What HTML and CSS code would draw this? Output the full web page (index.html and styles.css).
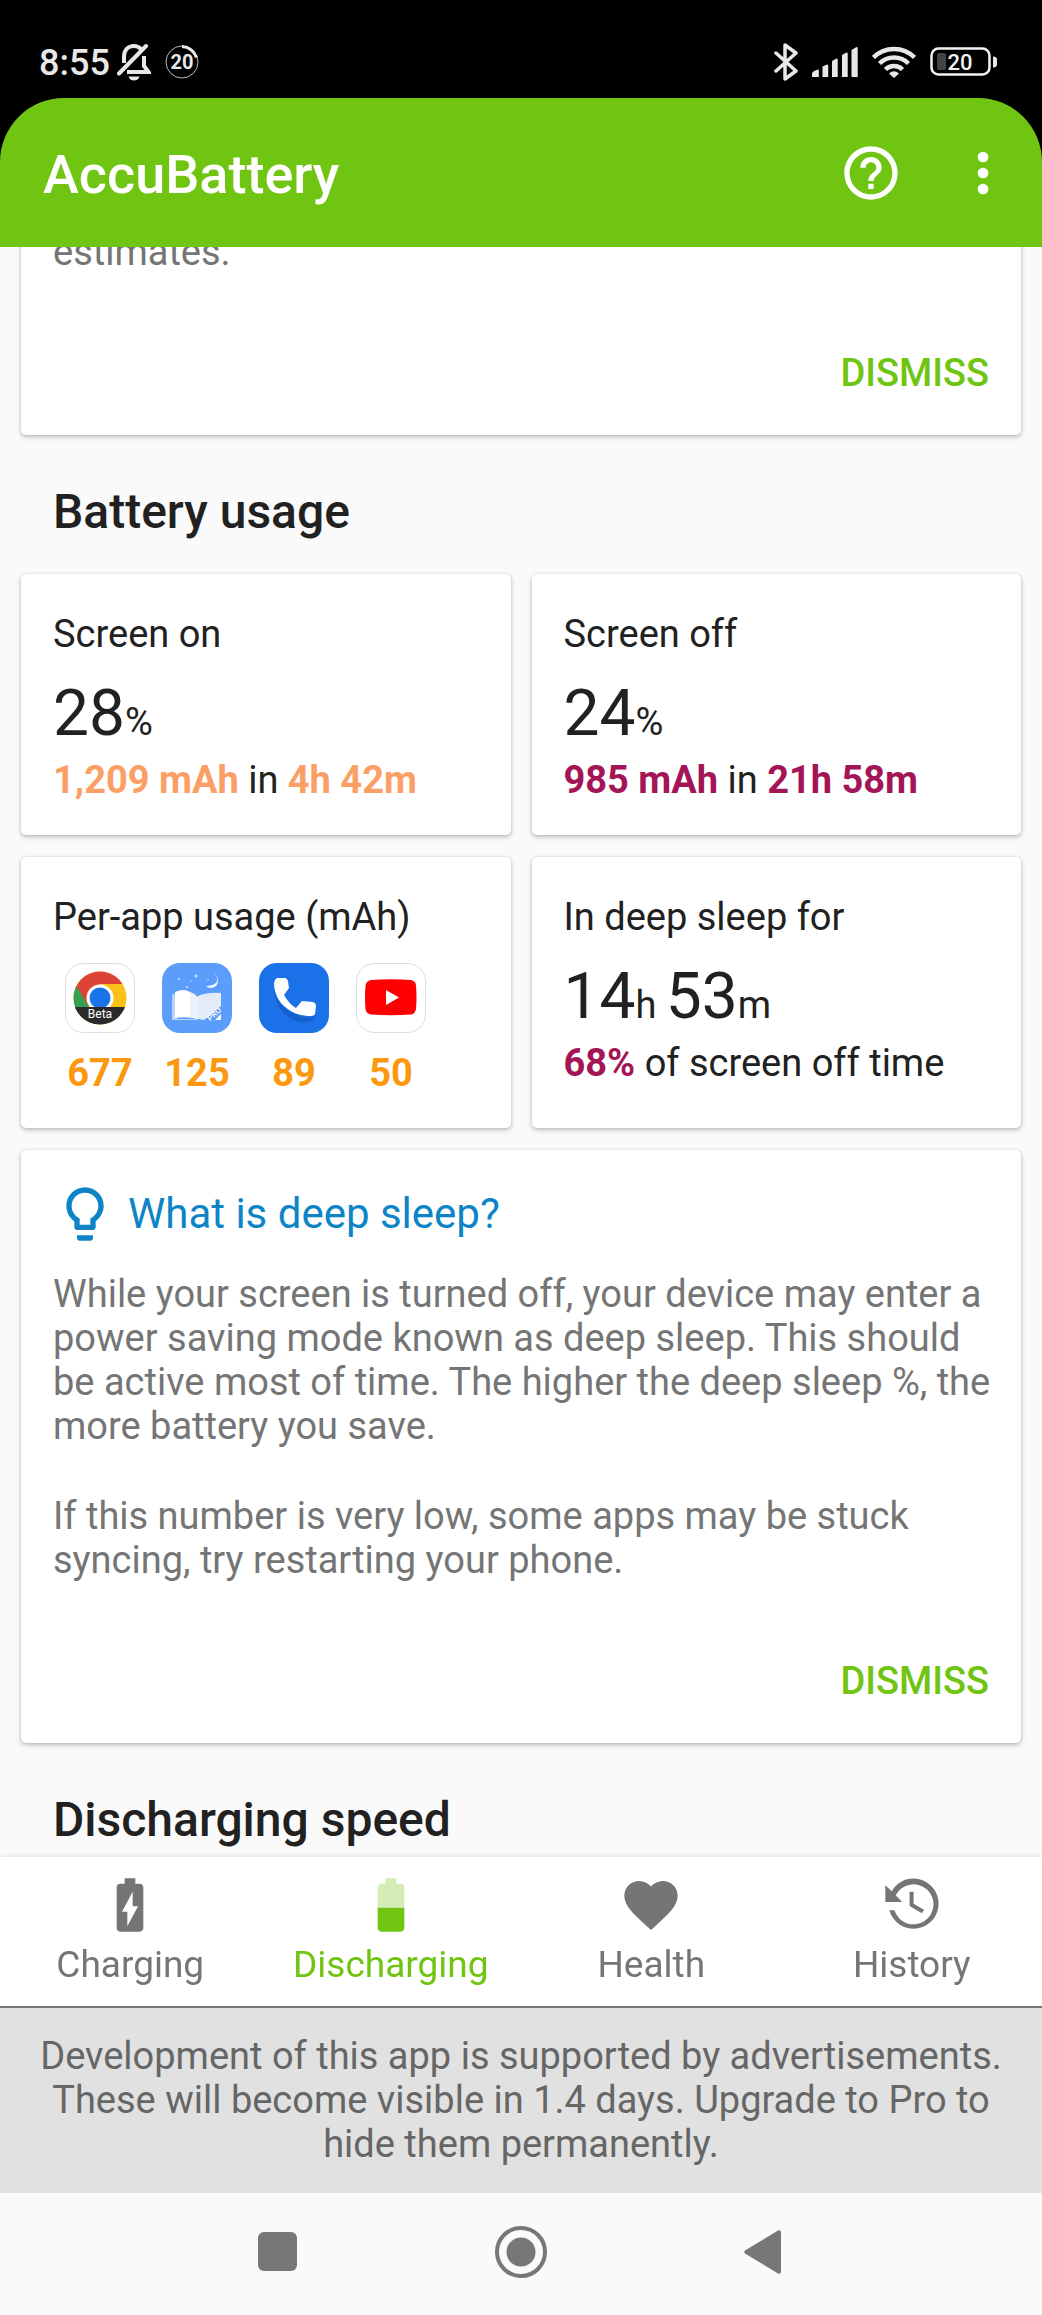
FILE: index.html
```html
<!DOCTYPE html>
<html lang="en">
<head>
  <meta charset="UTF-8">
  <meta name="viewport" content="width=device-width, initial-scale=1">
  <title>AccuBattery</title>
  <link rel="stylesheet" href="styles.css">
</head>
<body>
  <div class="screen">
    <div class="status-bar">
      <span class="clock">8:55</span>
      <svg class="bell" width="34" height="38" viewBox="0 0 34 38" fill="none" stroke="#e8e8e8" stroke-width="4">
        <path d="M7 20V14c0-7 4-11 10-11 3 0 5 1 7 3M27 13v10l4.500 6H10"/>
        <path d="M2 30.500L29 3" stroke-linecap="round"/>
        <path d="M11.500 33.500h11c-1 3-3 4-5.500 4s-4.500-1-5.500-4z" fill="#e8e8e8" stroke="none"/>
      </svg>
      <svg class="level" width="34" height="36" viewBox="0 0 34 36">
        <circle cx="17" cy="18" r="16" fill="none" stroke="#bbb" stroke-width="1"/>
        <path d="M17 2.500a16 16 0 0 1 14.500 11" fill="none" stroke="#e8e8e8" stroke-width="3"/>
        <text x="17" y="25" text-anchor="middle" class="level-text">20</text>
      </svg>
      <div class="status-right">
        <svg width="24" height="38" viewBox="0 0 24 38" fill="none" stroke="#e8e8e8" stroke-width="3.500" stroke-linejoin="round" stroke-linecap="round">
          <path d="M2 10l20 18-11 8V2l11 8L2 28"/>
        </svg>
        <svg width="46" height="30" viewBox="0 0 46 30" fill="#e8e8e8">
          <path d="M0 30v-3.500q0-2 6-4q.8 0 .8 1V30z"/>
          <path d="M10.500 30V19.500l4.500-2q1.200 0 1.200 1V30z"/>
          <path d="M20 30V14l4.500-2.500q1.200 0 1.200 1V30z"/>
          <path d="M30 30V8l4.500-2.500q1.200 0 1.200 1V30z"/>
          <path d="M39.500 30V3L44.500 0q1.200 0 1.200 1V30z"/>
        </svg>
        <svg width="44" height="32" viewBox="0 0 44 32" fill="none" stroke="#e8e8e8" stroke-width="4.500">
          <path d="M1.500 11.500a29 29 0 0 1 41 0"/>
          <path d="M7.500 17.500a20.500 20.500 0 0 1 29 0"/>
          <path d="M13.500 23.500a12 12 0 0 1 17 0"/>
          <path d="M17 27.500q5-4.500 10 0l-5 4.500z" fill="#e8e8e8" stroke="none"/>
        </svg>
        <svg width="67" height="30" viewBox="0 0 67 30">
          <rect x="1.500" y="1.500" width="58" height="26" rx="7" fill="none" stroke="#f2f2f2" stroke-width="2.500"/>
          <rect x="7" y="6" width="9" height="17" rx="2" fill="#444"/>
          <path d="M63 9.500q4 0 4 3v5q0 3-4 3z" fill="#e8e8e8"/>
          <text x="30" y="22.500" text-anchor="middle" class="battery-text">20</text>
        </svg>
      </div>
    </div>

    <div class="app">
      <header class="app-bar">
        <h1>AccuBattery</h1>
        <button class="icon-button" aria-label="Help">
          <svg viewBox="0 0 24 24"><path d="M11 18h2v-2h-2v2zm1-16C6.480 2 2 6.480 2 12s4.480 10 10 10 10-4.480 10-10S17.520 2 12 2zm0 18c-4.410 0-8-3.590-8-8s3.590-8 8-8 8 3.590 8 8-3.590 8-8 8zm0-14c-2.210 0-4 1.790-4 4h2c0-1.100.9-2 2-2s2 .9 2 2c0 2-3 1.750-3 5h2c0-2.250 3-2.500 3-5 0-2.210-1.790-4-4-4z"/></svg>
        </button>
        <button class="icon-button" aria-label="More options">
          <svg viewBox="0 0 24 24"><circle cx="12" cy="6" r="2"/><circle cx="12" cy="12" r="2"/><circle cx="12" cy="18" r="2"/></svg>
        </button>
      </header>

      <main class="content">
        <section class="card tip scrolled">
          <p>estimates.</p>
          <button class="dismiss">DISMISS</button>
        </section>

        <h2>Battery usage</h2>

        <div class="stats">
          <section class="card stat">
            <h3>Screen on</h3>
            <p class="value">28<small>%</small></p>
            <p class="detail"><b class="on">1,209 mAh</b> in <b class="on">4h 42m</b></p>
          </section>
          <section class="card stat">
            <h3>Screen off</h3>
            <p class="value">24<small>%</small></p>
            <p class="detail"><b class="off">985 mAh</b> in <b class="off">21h 58m</b></p>
          </section>
          <section class="card stat">
            <h3>Per-app usage (mAh)</h3>
            <ul class="apps">
              <li>
                <svg viewBox="0 0 70 70">
                  <clipPath id="disc"><circle cx="35" cy="35" r="26.500"/></clipPath>
                  <rect x=".5" y=".5" width="69" height="69" rx="18" fill="#fff" stroke="#ddd"/>
                  <g clip-path="url(#disc)">
                    <rect width="70" height="70" fill="#fbc116"/>
                    <path d="M0 0h70v21H35L23 44 8 22z" fill="#db4437"/>
                    <path d="M0 10l12 14 12 20 11 26H0z" fill="#34a050"/>
                    <circle cx="35" cy="35" r="13.500" fill="#fff"/>
                    <circle cx="35" cy="35" r="10.500" fill="#1a73e8"/>
                    <rect y="44" width="70" height="26" fill="#2b2b2b"/>
                  </g>
                  <text x="35" y="55" text-anchor="middle" class="beta">Beta</text>
                </svg>
                <span>677</span>
              </li>
              <li>
                <svg viewBox="0 0 70 70">
                  <rect width="70" height="70" rx="18" fill="#5c9cfa"/>
                  <path d="M50 10c8 3 8 13-6 13 3 3 12 3 12-6 0-4-3-6-6-7z" fill="#fff"/>
                  <g fill="#cfe2ff"><circle cx="17" cy="16" r="1"/><circle cx="34" cy="13" r="1.500"/><circle cx="25" cy="24" r="1"/><circle cx="29" cy="18" r=".7"/><circle cx="46" cy="17" r=".7"/></g>
                  <path d="M10 31h5v25h20v1H10z" fill="#b9d4fb"/>
                  <path d="M13 29q9-4 15 0l8 5v22q-12-3-23-1z" fill="#fff"/>
                  <path d="M36 33q10-4 23-3v13L42 57l-6-1z" fill="#e4ebf8"/>
                  <path d="M28 29q6 2 8 6v21q-5-2-8-2z" fill="#edf1f9"/>
                  <path d="M59 51v6h-6z" fill="#fff"/>
                  <text x="52" y="54" text-anchor="middle" transform="rotate(-43 52 51)" class="pro">PRO</text>
                </svg>
                <span>125</span>
              </li>
              <li>
                <svg viewBox="0 0 70 70">
                  <rect width="70" height="70" rx="18" fill="#1b72e8"/>
                  <path d="M15 20q0 30 36 35l6-3-2 5-10 3q-24-3-30-30z" fill="#1660cb"/>
                  <path d="M18 15h8q2 0 3 3l1 7-5 7q5 9 12 13l6-7 11 1q3 1 3 4l-1 8q-1 2-4 2C30 53 15 38 15 20q0-3 3-5z" fill="#fff"/>
                </svg>
                <span>89</span>
              </li>
              <li>
                <svg viewBox="0 0 70 70">
                  <rect x=".5" y=".5" width="69" height="69" rx="18" fill="#fff" stroke="#ddd"/>
                  <path d="M15 17q20-1.500 40 0 5 1 5 6 1 12 0 23-1 5-5 5.500-20 1.500-40 0-5-1-5.500-5.500-1-12 0-23 .5-5 5.500-6z" fill="#f00"/>
                  <path d="M30 27v15l13-7.500z" fill="#fff"/>
                </svg>
                <span>50</span>
              </li>
            </ul>
          </section>
          <section class="card stat">
            <h3>In deep sleep for</h3>
            <p class="value">14<small>h </small>53<small>m</small></p>
            <p class="detail"><b class="off">68%</b> of screen off time</p>
          </section>
        </div>

        <section class="card tip">
          <h3 class="tip-title">
            <svg viewBox="0 0 24 24"><path d="M9 21c0 .5.400 1 1 1h4c.6 0 1-.5 1-1v-1H9v1zm3-19C8.100 2 5 5.100 5 9c0 2.400 1.200 4.500 3 5.700V17c0 .5.400 1 1 1h6c.6 0 1-.5 1-1v-2.300c1.800-1.300 3-3.400 3-5.700 0-3.900-3.100-7-7-7zm2.900 11.100l-.9.600V16h-4v-2.300l-.9-.6C7.800 12.200 7 10.600 7 9c0-2.800 2.200-5 5-5s5 2.200 5 5c0 1.600-.8 3.200-2.100 4.100z"/></svg>
            What is deep sleep?
          </h3>
          <p>While your screen is turned off, your device may enter a power saving mode known as deep sleep. This should be active most of time. The higher the deep sleep %, the more battery you save.</p>
          <p>If this number is very low, some apps may be stuck syncing, try restarting your phone.</p>
          <button class="dismiss">DISMISS</button>
        </section>

        <h2>Discharging speed</h2>
      </main>

      <nav class="tabs">
        <a href="#charging">
          <svg viewBox="0 0 24 24"><path d="M15.670 4H14V2h-4v2H8.330C7.600 4 7 4.600 7 5.330v15.330C7 21.400 7.600 22 8.330 22h7.330c.74 0 1.340-.6 1.340-1.330V5.330C17 4.600 16.400 4 15.670 4zM11 20v-5.500H9L13 7v5.500h2L11 20z"/></svg>
          Charging
        </a>
        <a href="#discharging" class="active">
          <svg viewBox="0 0 24 24"><path fill-opacity=".3" d="M17 5.330C17 4.600 16.400 4 15.670 4H14V2h-4v2H8.330C7.600 4 7 4.600 7 5.330V13h10V5.330z"/><path d="M7 13v7.670C7 21.400 7.600 22 8.330 22h7.330c.74 0 1.340-.6 1.340-1.330V13H7z"/></svg>
          Discharging
        </a>
        <a href="#health">
          <svg viewBox="0 0 24 24"><path d="M12 21.350l-1.450-1.320C5.400 15.360 2 12.280 2 8.500 2 5.420 4.420 3 7.500 3c1.740 0 3.410.81 4.500 2.090C13.090 3.810 14.760 3 16.500 3 19.580 3 22 5.420 22 8.500c0 3.780-3.400 6.860-8.550 11.540L12 21.350z"/></svg>
          Health
        </a>
        <a href="#history">
          <svg viewBox="0 0 24 24"><path d="M12.600 2.100a9.400 9.400 0 0 0-8.200 4.700L2 4.600v6.300h6.300L5.900 8.300a7.500 7.500 0 1 1-.5 5.700l-1.900 0a9.400 9.400 0 1 0 9.100-11.900zM11.100 7v5.400l4.600 2.700.8-1.300-3.900-2.300V7z"/></svg>
          History
        </a>
      </nav>

      <p class="ad-notice">Development of this app is supported by advertisements. These will become visible in 1.4 days. Upgrade to Pro to hide them permanently.</p>
    </div>

    <div class="system-nav">
      <button aria-label="Recent apps">
        <svg viewBox="0 0 54 54"><rect x="7" y="7" width="39" height="39" rx="6"/></svg>
      </button>
      <button aria-label="Home">
        <svg viewBox="0 0 54 54"><circle cx="27" cy="27" r="24" fill="none" stroke="#777" stroke-width="4"/><circle cx="27" cy="27" r="14.500"/></svg>
      </button>
      <button aria-label="Back">
        <svg viewBox="0 0 54 54"><path d="M8 25.500L41 5.500q3-1 3 2v39q0 3-3 2L8 28.500q-1.500-1.500 0-3z"/></svg>
      </button>
    </div>
  </div>
</body>
</html>
```

FILE: styles.css
```css
* { box-sizing: border-box; margin: 0; padding: 0; }
body { background: #000; color: #212121; font: 38px/44px Roboto, "Noto Sans", sans-serif; }
button { background: none; border: none; font: inherit; cursor: pointer; }
svg { display: block; flex: none; }

.screen { display: flex; flex-direction: column; height: 100vh; }

/* phone status bar */
.status-bar   { display: flex; align-items: center; height: 98px; padding: 25px 45px 0 39px; color: #e8e8e8; flex: none; }
.clock        { font-size: 36px; line-height: 44px; padding-top: 3px; font-weight: 500; }
.bell         { margin-left: 7px; }
.level        { margin-left: 14px; }
.level-text   { font-size: 20px; font-weight: 700; fill: #e8e8e8; }
.status-right { display: flex; align-items: center; gap: 14px; margin-left: auto; }
.battery-text { font-size: 22px; font-weight: 500; fill: #f2f2f2; }

/* app */
.app     { display: flex; flex-direction: column; flex: 1; min-height: 0; }
.app-bar { display: flex; align-items: center; gap: 48px; height: 149px; padding: 0 27px 0 43px; flex: none;
           background: #70c412; color: #fff; border-radius: 64px 64px 0 0; }
.app-bar h1      { flex: 1; padding-top: 4px; font-size: 54px; line-height: 60px; font-weight: 500; }
.icon-button svg { width: 64px; height: 64px; fill: #fff; }

.content    { flex: 1; min-height: 0; overflow-y: auto; scrollbar-width: none; background: #fafafa; padding: 0 21px; }
.content h2 { margin: 49px 32px 34px; font-size: 48px; line-height: 56px; font-weight: 500; }

.card { background: #fff; border-radius: 5px; box-shadow: 0 2px 5px rgba(0,0,0,0.25), 0 0 2px rgba(0,0,0,0.12); }

.stats       { display: grid; grid-template-columns: 1fr 1fr; gap: 22px 21px; margin-bottom: 22px; }
.stat        { padding: 38px 32px 33px; }
.stat h3     { font-size: 38px; font-weight: 400; }
.value       { margin: 20px 0 7px; font-size: 64px; line-height: 75px; }
.value small { font-size: 38px; line-height: 44px; }
.on          { color: #fb9f66; }
.off         { color: #a31556; }

.apps     { display: flex; gap: 27px; margin-top: 24px; padding-left: 12px; list-style: none; }
.apps li  { display: flex; flex-direction: column; align-items: center; gap: 18px; width: 70px;
            color: #fb980f; font-weight: 700; }
.apps svg { width: 70px; height: 70px; }
.beta     { font-size: 12px; font-weight: 400; fill: #fff; }
.pro      { font-size: 8px; font-weight: 500; fill: #fff; }

.tip           { display: flex; flex-direction: column; padding: 32px 20px 40px 32px; color: #757575; }
.tip p + p     { margin-top: 46px; }
.tip-title     { display: flex; align-items: center; gap: 11px; margin-bottom: 26px;
                 font-size: 42px; font-weight: 400; color: #0c84c6; }
.tip-title svg { width: 64px; height: 64px; fill: currentColor; }
.dismiss       { align-self: flex-end; margin-top: 77px; padding: 0 12px; font-weight: 500; color: #70c412; }
.scrolled      { margin-top: -17px; padding-top: 0; }

.tabs        { display: grid; grid-template-columns: repeat(4, 1fr); flex: none; padding: 16px 0 19px;
               background: #fff; box-shadow: 0 -1px 4px rgba(0,0,0,0.1); position: relative; font-size: 37px; }
.tabs a      { display: flex; flex-direction: column; align-items: center; gap: 6px; color: #757575; text-decoration: none; }
.tabs svg    { width: 64px; height: 64px; fill: currentColor; }
.tabs .active { color: #70c412; }

.ad-notice { flex: none; padding: 26px 32px 27px; border-top: 2px solid #757575; background: #e1e1e1;
             color: #666; text-align: center; position: relative; }

/* android navigation */
.system-nav        { display: grid; grid-template-columns: repeat(3, 1fr); flex: none; align-items: center;
                     height: 122px; padding: 0 15% 4px; background: #fafafa; }
.system-nav button { display: flex; justify-content: center; }
.system-nav svg    { width: 54px; height: 54px; fill: #777; }
```
